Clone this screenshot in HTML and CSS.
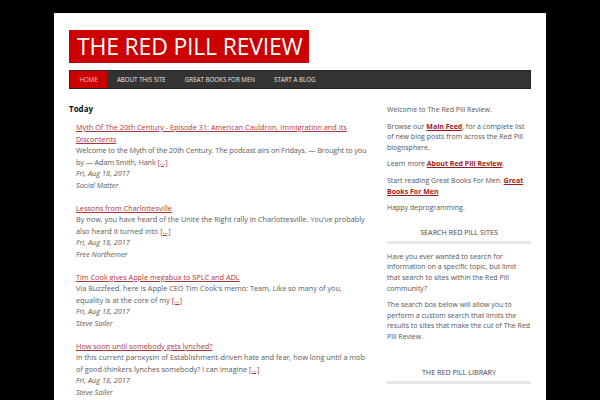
FILE: index.html
```html
<!DOCTYPE html>
<html>
<head>
<meta charset="utf-8">
<link rel="stylesheet" href="styles.css">
</head>
<body>
<div class="page">
  <header class="header">
    <div class="logo">THE RED PILL REVIEW</div>
  </header>
  <nav class="nav">
    <a class="nav-item active">HOME</a>
    <a class="nav-item">ABOUT THIS SITE</a>
    <a class="nav-item">GREAT BOOKS FOR MEN</a>
    <a class="nav-item">START A BLOG</a>
  </nav>
  <div class="content">
    <main class="main">
      <h2 class="day">Today</h2>
      <div class="post">
        <a class="post-title">Myth Of The 20th Century - Episode 31: American Cauldron, Immigration and Its Discontents</a>
        <div class="excerpt tight">Welcome to the Myth of the 20th Century. The podcast airs on Fridays. — Brought to you by — Adam Smith, Hank <a class="more">[…]</a></div>
        <div class="meta">Fri, Aug 18, 2017</div>
        <div class="meta">Social Matter</div>
      </div>
      <div class="post">
        <a class="post-title">Lessons from Charlottesville</a>
        <div class="excerpt">By now, you have heard of the Unite the Right rally in Charlottesville. You've probably also heard it turned into <a class="more">[…]</a></div>
        <div class="meta">Fri, Aug 18, 2017</div>
        <div class="meta">Free Northerner</div>
      </div>
      <div class="post">
        <a class="post-title">Tim Cook gives Apple megabux to SPLC and ADL</a>
        <div class="excerpt">Via Buzzfeed, here is Apple CEO Tim Cook's memo: Team, Like so many of you, equality is at the core of my <a class="more">[…]</a></div>
        <div class="meta">Fri, Aug 18, 2017</div>
        <div class="meta">Steve Sailer</div>
      </div>
      <div class="post">
        <a class="post-title">How soon until somebody gets lynched?</a>
        <div class="excerpt">In this current paroxysm of Establishment-driven hate and fear, how long until a mob of good-thinkers lynches somebody? I can imagine <a class="more">[…]</a></div>
        <div class="meta">Fri, Aug 18, 2017</div>
        <div class="meta">Steve Sailer</div>
      </div>
    </main>
    <aside class="sidebar">
      <p>Welcome to The Red Pill Review.</p>
      <p>Browse our <a class="strong-link">Main Feed</a>, for a complete list of new blog posts from across the Red Pill blogosphere.</p>
      <p>Learn more <a class="strong-link">About Red Pill Review</a>.</p>
      <p>Start reading Great Books For Men. <a class="strong-link">Great Books For Men</a></p>
      <p>Happy deprogramming.</p>
      <h3 class="widget-title">SEARCH RED PILL SITES</h3>
      <p>Have you ever wanted to search for information on a specific topic, but limit that search to sites within the Red Pill community?</p>
      <p>The search box below will allow you to perform a custom search that limits the results to sites that make the cut of The Red Pill Review.</p>
      <h3 class="widget-title library">THE RED PILL LIBRARY</h3>
    </aside>
  </div>
</div>
</body>
</html>
```
FILE: styles.css
```css
* { box-sizing: border-box; }
html, body { margin: 0; padding: 0; }
body {
  background: #000;
  font-family: "Open Sans", "DejaVu Sans", sans-serif;
  color: #555;
  height: 400px;
  overflow: hidden;
}
.page {
  margin: 13px 54px 0;
  background: #fff;
  padding: 17px 15px 0 15px;
  min-height: 387px;
}
.header { display: flex; }
.logo {
  background: #cc0000;
  color: #fff;
  font-size: 23px;
  line-height: 33px;
  height: 33px;
  padding: 0 8px;
  width: 240px;
  white-space: nowrap;
  letter-spacing: -0.2px;
}
.nav {
  display: flex;
  margin-top: 7px;
  height: 19px;
  background: #333;
  border: 1px solid #262626;
}
.nav-item {
  display: block;
  color: #e8e8e8;
  font-size: 6.2px;
  line-height: 17px;
  padding: 0 9.5px;
  text-decoration: none;
}
.nav-item.active { background: #cc0000; color: #f4c4c4; }
.content {
  display: flex;
  gap: 18px;
  margin-top: 14px;
}
.main { width: 300px; flex: none; }
.sidebar { width: 144px; flex: none; font-size: 7px; line-height: 10.6px; color: #555; padding-top: 2px; }
.day {
  font-size: 8px;
  font-weight: bold;
  color: #111;
  margin: 0 0 8px;
  line-height: 11px;
}
.post {
  padding-left: 7px;
  font-size: 7.3px;
  line-height: 11.5px;
  margin-bottom: 11.5px;
}
.post-title {
  display: block;
  color: #b0353a;
  text-decoration: underline;
}
.excerpt { color: #5a5a5a; }
.excerpt.tight { letter-spacing: -0.12px; }
.more { color: #b0353a; text-decoration: underline; }
.meta { font-style: italic; color: #5a5a5a; }
.sidebar p { margin: 0 0 6px; }
.strong-link { color: #a31a22; font-weight: bold; text-decoration: underline; }
.widget-title {
  font-weight: normal;
  font-size: 7.2px;
  color: #444;
  text-align: center;
  margin: 13px 0 8px;
  padding-bottom: 4px;
  border-bottom: 3px solid #e6e6e6;
  line-height: 10px;
}
.widget-title.library { margin-top: 24px; }
```
